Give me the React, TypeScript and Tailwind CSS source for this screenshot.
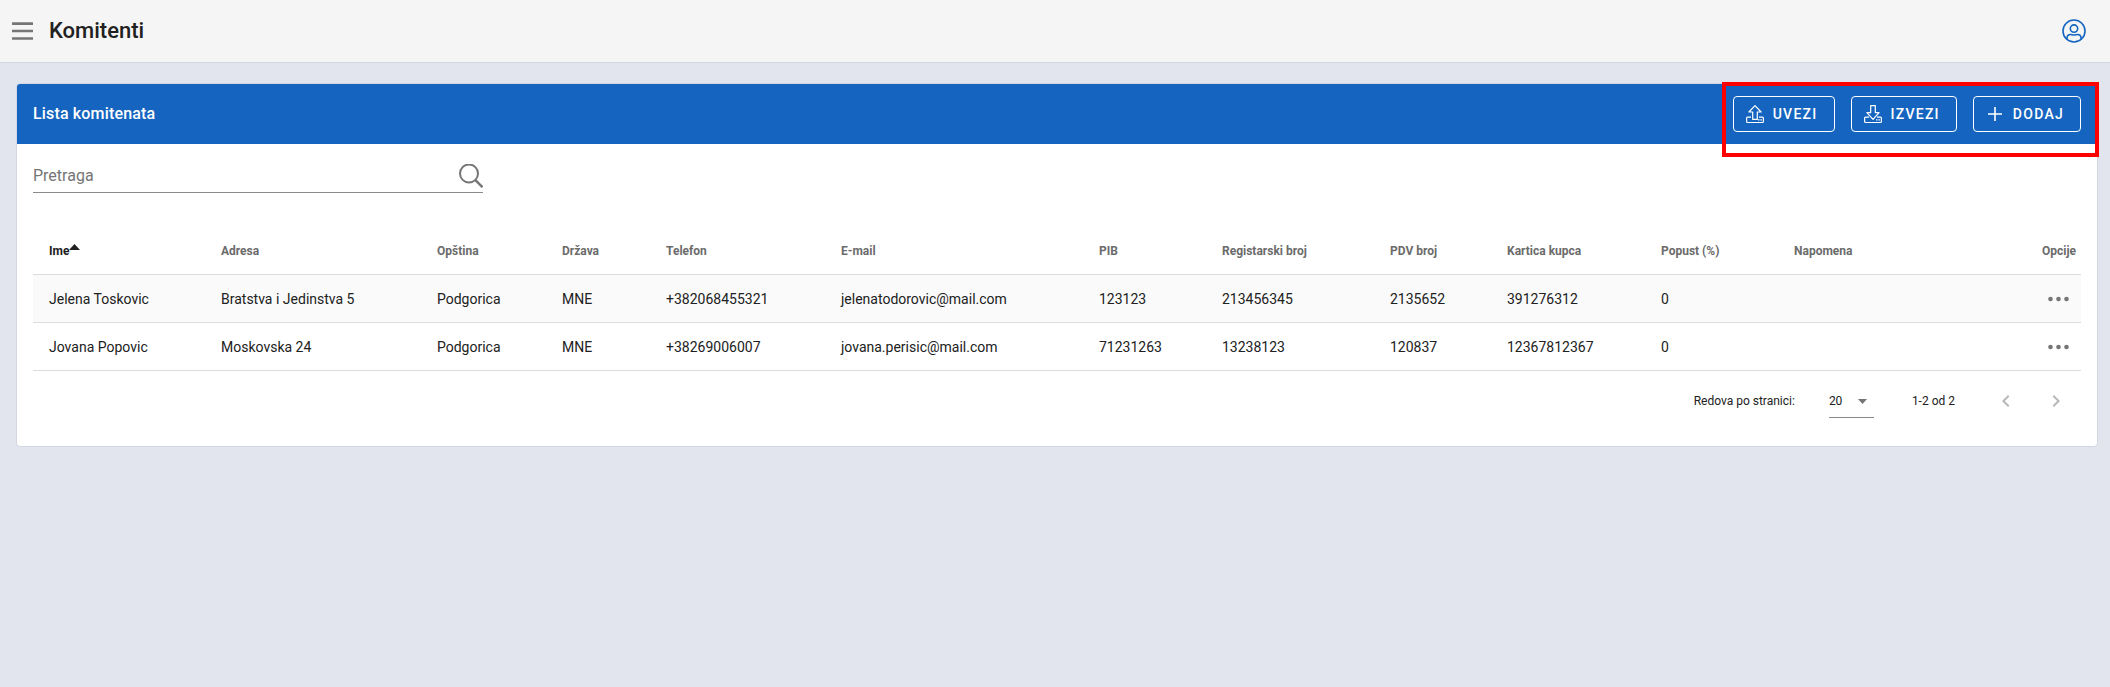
import React from "react";

const columns = [
  { label: "Ime", width: "w-[172px]" },
  { label: "Adresa", width: "w-[216px]" },
  { label: "Opština", width: "w-[125px]" },
  { label: "Država", width: "w-[104px]" },
  { label: "Telefon", width: "w-[175px]" },
  { label: "E-mail", width: "w-[258px]" },
  { label: "PIB", width: "w-[123px]" },
  { label: "Registarski broj", width: "w-[168px]" },
  { label: "PDV broj", width: "w-[117px]" },
  { label: "Kartica kupca", width: "w-[154px]" },
  { label: "Popust (%)", width: "w-[133px]" },
  { label: "Napomena", width: "w-[203px]" },
  { label: "Opcije", width: "w-[100px]" },
];

const rows = [
  ["Jelena Toskovic", "Bratstva i Jedinstva 5", "Podgorica", "MNE", "+382068455321", "jelenatodorovic@mail.com", "123123", "213456345", "2135652", "391276312", "0", ""],
  ["Jovana Popovic", "Moskovska 24", "Podgorica", "MNE", "+38269006007", "jovana.perisic@mail.com", "71231263", "13238123", "120837", "12367812367", "0", ""],
];

function UserIcon() {
  return (
    <svg className="size-6" viewBox="0 0 24 24" fill="none" stroke="currentColor" strokeWidth="1.6" aria-hidden="true">
      <circle cx="12" cy="12" r="11" />
      <circle cx="12" cy="9.6" r="3.7" />
      <path d="M5 20.200v-1.200c0-2.200 1.500-3.500 3.700-3.500 1.200 0 1.800.5 3.300.5s2.100-.5 3.300-.5c2.200 0 3.700 1.300 3.700 3.500v1.200" />
    </svg>
  );
}

function TrayIcon({ direction }: { direction: "up" | "down" }) {
  return (
    <svg className="h-5 w-[18px]" viewBox="0 0 18 20" fill="none" stroke="currentColor" strokeWidth="1.2" aria-hidden="true">
      {direction === "up" ? (
        <path d="M6.700 15.300V8H2.900L9 1.600 15.100 8H11.300v7.300z" strokeLinejoin="round" />
      ) : (
        <path d="M6.700 1.600V8.700H2.900L9 15.300 15.100 8.700H11.300V1.600z" strokeLinejoin="round" />
      )}
      <path d="M5 13.100H1.600a1 1 0 0 0-1 1v3.400a1 1 0 0 0 1 1h14.800a1 1 0 0 0 1-1v-3.400a1 1 0 0 0-1-1H13" />
      <path d="M12 15.900h1.500M14.400 15.900h1.500" />
    </svg>
  );
}

function PlusIcon() {
  return (
    <svg className="h-5 w-[18px]" viewBox="0 0 18 20" stroke="currentColor" strokeWidth="1.6" aria-hidden="true">
      <path d="M9 3v14M2 10h14" />
    </svg>
  );
}

function ActionButton({ icon, children }: { icon: React.ReactNode; children: React.ReactNode }) {
  return (
    <button type="button" className="flex h-9 items-center gap-[9px] rounded border border-white pr-4 pl-3 font-medium tracking-[0.09em]">
      {icon}
      {children}
    </button>
  );
}

function Chevron({ d, label }: { d: string; label: string }) {
  return (
    <button type="button" aria-label={label} disabled className="flex size-[50px] items-center justify-center text-[#b8b8b8]">
      <svg className="size-6" viewBox="0 0 24 24" fill="currentColor" aria-hidden="true">
        <path d={d} />
      </svg>
    </button>
  );
}

export default function App() {
  return (
    <div className="min-h-screen bg-[#e2e5ed] font-['Roboto',sans-serif] text-sm text-[#212121]">
      <header className="flex h-[63px] items-center border-b border-[#d3d7e0] bg-[#f5f5f5] pr-6 pl-3">
        <button type="button" aria-label="Meni" className="text-[#757575]">
          <svg className="h-5 w-[21px]" viewBox="0 0 21 20" stroke="currentColor" strokeWidth="2.700" aria-hidden="true">
            <path d="M0 2.700h21M0 10h21M0 17.500h21" />
          </svg>
        </button>
        <h1 className="ml-4 text-[22px] font-medium">Komitenti</h1>
        <button type="button" aria-label="Profil" className="ml-auto text-[#1565c0]">
          <UserIcon />
        </button>
      </header>

      <main className="pt-5 pr-3 pl-4">
        <section className="rounded border border-[#d3d7e3] bg-white">
          <div className="flex h-[60px] items-center justify-between rounded-t-[3px] bg-[#1565c0] px-4 text-white">
            <h2 className="text-base font-medium tracking-[0.01em]">Lista komitenata</h2>
            <div className="relative flex gap-4">
              <ActionButton icon={<TrayIcon direction="up" />}>UVEZI</ActionButton>
              <ActionButton icon={<TrayIcon direction="down" />}>IZVEZI</ActionButton>
              <ActionButton icon={<PlusIcon />}>DODAJ</ActionButton>
              <div className="pointer-events-none absolute -top-[14px] -right-[18px] -bottom-[25px] -left-[11px] border-4 border-[#ff0000]" />
            </div>
          </div>

          <div className="px-4 pt-3">
            <label className="flex h-[37px] w-[450px] items-center border-b border-[#8a8a8a] pt-1 text-[#757575]">
              <input
                type="text"
                placeholder="Pretraga"
                aria-label="Pretraga"
                className="min-w-0 flex-1 bg-transparent text-base outline-none placeholder:text-[#757575]"
              />
              <svg className="size-6" viewBox="0 0 24 24" fill="none" stroke="currentColor" strokeWidth="2" aria-hidden="true">
                <circle cx="10" cy="9.500" r="9" />
                <path d="M16.200 15.800l7.300 7.400" strokeWidth="2.400" />
              </svg>
            </label>

            <table className="mt-[33px] w-full table-fixed border-separate border-spacing-0 text-left">
              <thead>
                <tr className="text-xs text-[#6b6b6b]">
                  {columns.map((column, index) => (
                    <th
                      key={column.label}
                      scope="col"
                      className={`${column.width} h-[49px] border-b border-[#dcdcdc] pt-px font-bold ${index === 0 ? "pl-4 text-[#212121]" : index === 12 ? "pr-[5px] text-right" : "pl-4"}`}
                    >
                      {index === 0 ? (
                        <button type="button" className="flex font-bold">
                          {column.label}
                          <svg className="mt-px h-[6px] w-[11px]" viewBox="0 0 11 6" fill="currentColor" aria-hidden="true">
                            <path d="M0 6L5.500 0 11 6z" />
                          </svg>
                        </button>
                      ) : (
                        column.label
                      )}
                    </th>
                  ))}
                </tr>
              </thead>
              <tbody>
                {rows.map((row) => (
                  <tr key={row[0]} className="odd:bg-[#fafafa]">
                    {row.map((cell, index) => (
                      <td key={index} className="h-12 border-b border-[#dcdcdc] pl-4 whitespace-nowrap">
                        {cell}
                      </td>
                    ))}
                    <td className="h-12 border-b border-[#dcdcdc] pr-3">
                      <button type="button" aria-label="Opcije" className="ml-auto block text-[#757575]">
                        <svg className="h-[6px] w-[21px]" viewBox="0 0 21 6" fill="currentColor" aria-hidden="true">
                          <circle cx="2.500" cy="3" r="2.300" />
                          <circle cx="10.500" cy="3" r="2.300" />
                          <circle cx="18.500" cy="3" r="2.300" />
                        </svg>
                      </button>
                    </td>
                  </tr>
                ))}
              </tbody>
            </table>

            <div className="flex h-[75px] items-start justify-end text-xs">
              <label className="flex items-center pt-[13px]">
                <span className="leading-[34px]">Redova po stranici:</span>
                <span className="relative ml-[34px] flex items-center">
                  <select defaultValue="20" className="h-[34px] w-[45px] appearance-none border-b border-[#8a8a8a] bg-transparent outline-none">
                    <option>10</option>
                    <option>20</option>
                    <option>50</option>
                  </select>
                  <svg className="pointer-events-none absolute right-[7px] h-[5px] w-[9px]" viewBox="0 0 9 5" fill="#757575" aria-hidden="true">
                    <path d="M0 0h9L4.500 5z" />
                  </svg>
                </span>
              </label>
              <span className="ml-[38px] pt-[13px] leading-[34px]">1-2 od 2</span>
              <div className="ml-[26px] flex pt-[5px]">
                <Chevron label="Prethodna" d="M15.410 7.410L14 6l-6 6 6 6 1.410-1.410L10.830 12z" />
                <Chevron label="Sljedeća" d="M8.590 16.590L13.170 12 8.590 7.410 10 6l6 6-6 6z" />
              </div>
            </div>
          </div>
        </section>
      </main>
    </div>
  );
}
